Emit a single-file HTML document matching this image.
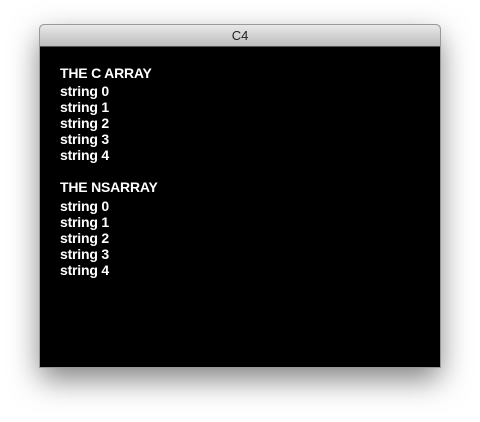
<!DOCTYPE html>
<html><head><style>
body{margin:0;width:480px;height:422px;background:#fff;position:relative;overflow:hidden;font-family:"Liberation Sans",sans-serif}
.win{position:absolute;left:40px;top:25px;width:400px;height:342px;box-shadow:0 12px 30px rgba(0,0,0,.5);border-radius:4px 4px 0 0;background:#000;outline:1px solid #999}
.title{height:21px;background:linear-gradient(#e8e8e8,#bdbdbd);border-radius:4px 4px 0 0;border-bottom:1px solid #555;text-align:center;font-size:13px;line-height:21px;color:#222}
.c{position:absolute;left:20px;top:40px;color:#fff;font-size:14px;font-weight:bold;line-height:16px;letter-spacing:-0.2px}
</style></head><body>
<div class="win"><div class="title">C4</div>
<div class="c">THE C ARRAY<br><span style="display:block;margin-top:2px">string 0<br>string 1<br>string 2<br>string 3<br>string 4</span>
<div style="margin-top:16px">THE NSARRAY</div><span style="display:block;margin-top:3px">string 0<br>string 1<br>string 2<br>string 3<br>string 4</span></div>
</div>
</body></html>
